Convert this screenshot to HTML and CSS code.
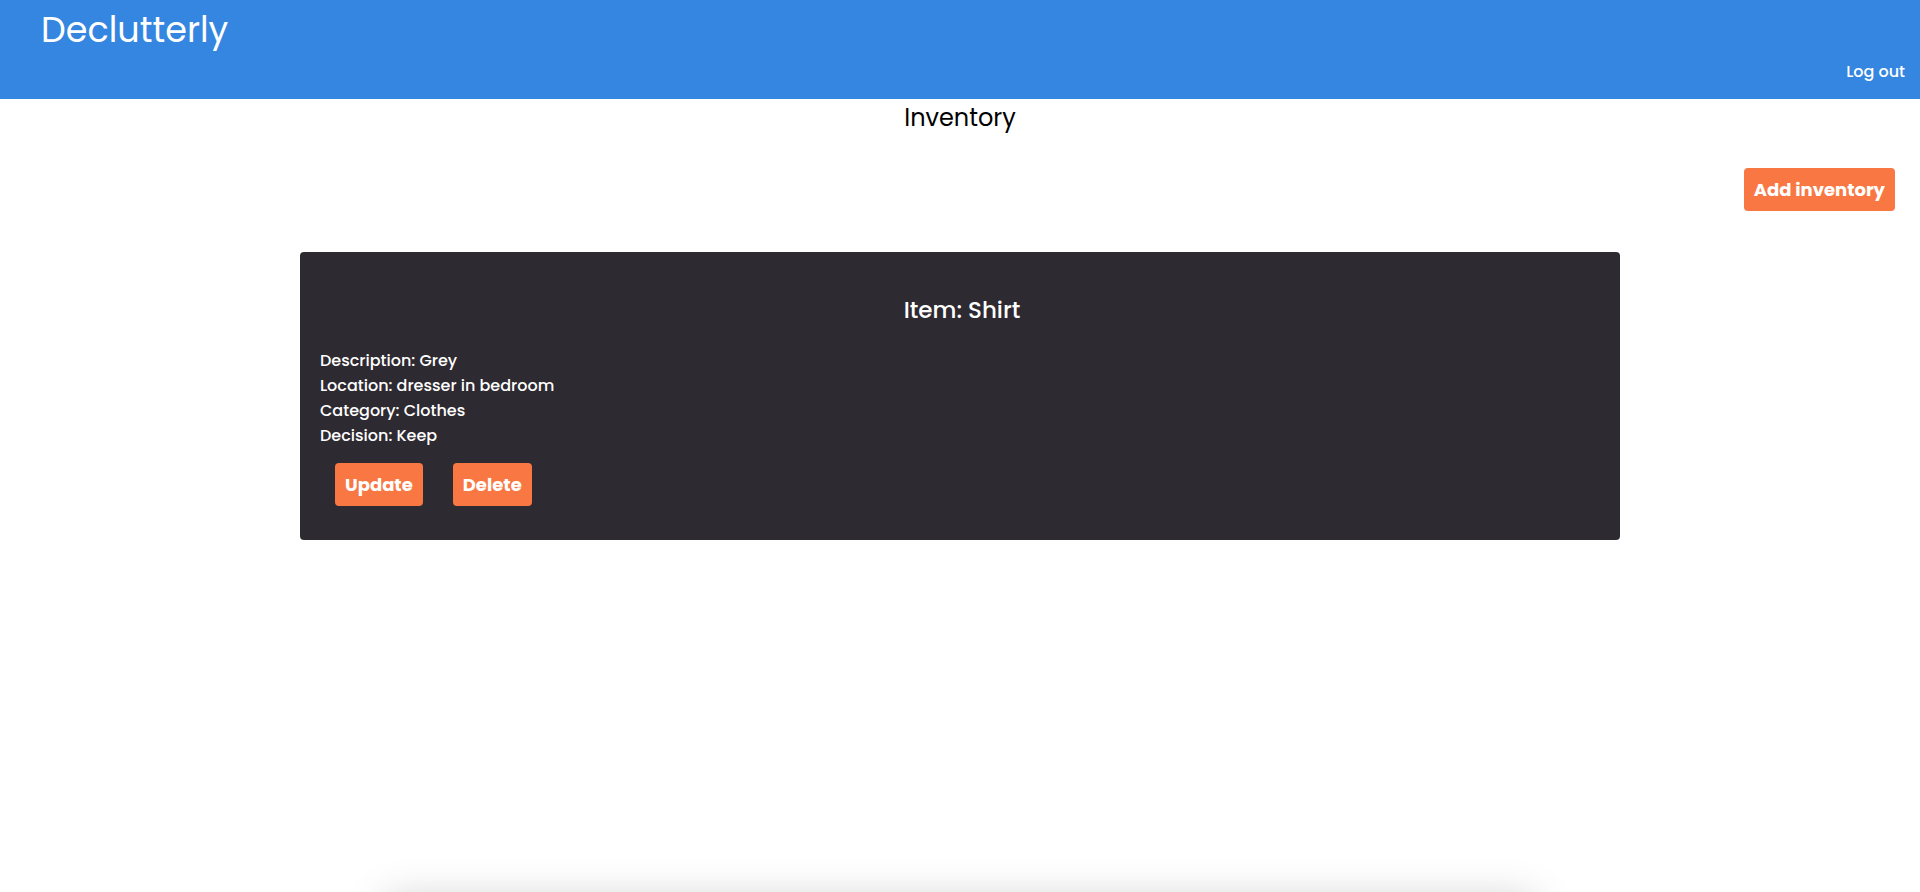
FILE: index.html
```html
<!DOCTYPE html>
<html lang="en">
<head>
<meta charset="utf-8">
<title>Declutterly</title>
<link rel="stylesheet" href="styles.css">
</head>
<body>
<header class="topbar">
  <h1 class="brand">Declutterly</h1>
  <nav class="nav">
    <a class="nav-link" href="#">Log out</a>
  </nav>
</header>
<main class="page">
  <h2 class="page-title">Inventory</h2>
  <div class="toolbar">
    <button class="btn">Add inventory</button>
  </div>
  <section class="card">
    <h3 class="card-title">Item: Shirt</h3>
    <div class="details">
      <p class="detail">Description: Grey</p>
      <p class="detail">Location: dresser in bedroom</p>
      <p class="detail">Category: Clothes</p>
      <p class="detail">Decision: Keep</p>
    </div>
    <div class="actions">
      <button class="btn">Update</button>
      <button class="btn">Delete</button>
    </div>
  </section>
  <div class="below"></div>
</main>
</body>
</html>
```
FILE: styles.css
```css
html, body {
  margin: 0;
  padding: 0;
  background: #ffffff;
}
body {
  font-family: "Poppins", "Inter", "Noto Sans", sans-serif;
  color: #000;
  overflow: hidden;
  height: 892px;
}
.topbar {
  background: #3586e0;
  height: 99px;
  box-sizing: border-box;
  padding: 10px 15px 0 41px;
  display: flex;
  flex-direction: column;
}
.brand {
  margin: 0;
  color: #fff;
  font-size: 35px;
  font-weight: 400;
  line-height: 40px;
}
.nav {
  display: flex;
  justify-content: flex-end;
  margin-top: 10px;
}
.nav-link {
  color: #fff;
  text-decoration: none;
  font-size: 16px;
  font-weight: 500;
  line-height: 24px;
}
.page {
  display: flex;
  flex-direction: column;
}
.page-title {
  margin: 3px 0 0;
  text-align: center;
  font-size: 24px;
  font-weight: 400;
  line-height: 32px;
}
.toolbar {
  display: flex;
  justify-content: flex-end;
  padding: 0 25px;
  margin-top: 34px;
}
.btn {
  font-family: inherit;
  background: #f97743;
  color: #fff;
  border: 0;
  border-radius: 4px;
  font-size: 18px;
  font-weight: 700;
  height: 43px;
  padding: 0 10px;
  cursor: pointer;
}
.card {
  margin: 41px 300px 0;
  background: #2e2a31;
  border-radius: 4px;
  color: #fff;
  padding: 42px 16px 29px 20px;
  height: 288px;
  box-sizing: border-box;
}
.card-title {
  margin: 0;
  text-align: center;
  font-size: 23px;
  font-weight: 500;
  line-height: 32px;
}
.details {
  margin-top: 22px;
}
.detail {
  margin: 0;
  font-size: 16px;
  font-weight: 500;
  line-height: 25px;
}
.actions {
  display: flex;
  gap: 30px;
  padding-left: 15px;
  margin-top: 15px;
}
.below {
  margin: 360px auto 0;
  width: 1150px;
  height: 200px;
  background: #fff;
  box-shadow: 0 0 40px rgba(0, 0, 0, 0.2);
}
```
